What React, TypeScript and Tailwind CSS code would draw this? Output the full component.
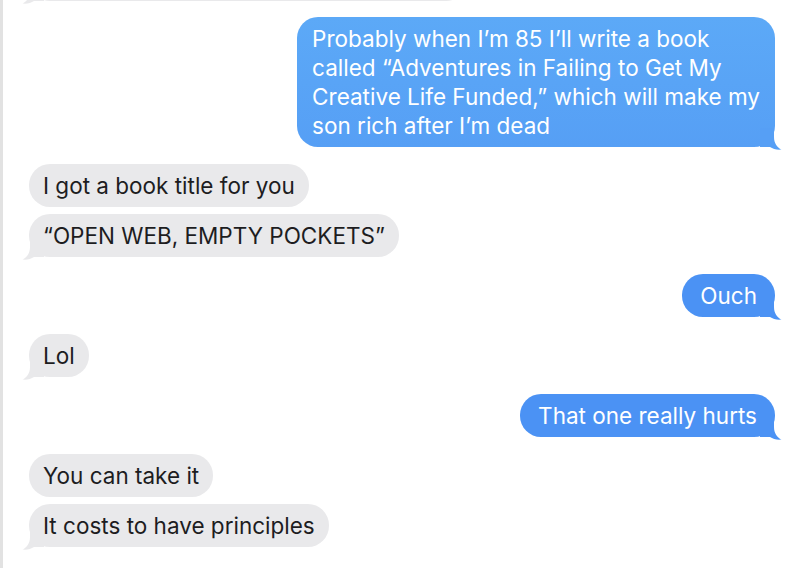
import React from 'react';

type Msg = {
  from: 'me' | 'them';
  lines: string[];
  tail?: boolean;
};

const messages: Msg[] = [
  {
    from: 'me',
    lines: [
      'Probably when I’m 85 I’ll write a book',
      'called “Adventures in Failing to Get My',
      'Creative Life Funded,” which will make my',
      'son rich after I’m dead',
    ],
    tail: true,
  },
  { from: 'them', lines: ['I got a book title for you'] },
  { from: 'them', lines: ['“OPEN WEB, EMPTY POCKETS”'], tail: true },
  { from: 'me', lines: ['Ouch'], tail: true },
  { from: 'them', lines: ['Lol'], tail: true },
  { from: 'me', lines: ['That one really hurts'], tail: true },
  { from: 'them', lines: ['You can take it'] },
  { from: 'them', lines: ['It costs to have principles'], tail: true },
];

// iMessage style tail, drawn for the right side and mirrored for the left
function Tail({ side, fill }: { side: 'left' | 'right'; fill: string }) {
  return (
    <svg
      viewBox="0 0 22 22"
      className={
        side === 'right'
          ? `absolute -right-[7px] -bottom-[3px] h-[22px] w-[22px] ${fill}`
          : `absolute -left-[7px] -bottom-[3px] h-[22px] w-[22px] -scale-x-100 ${fill}`
      }
    >
      <path d="M0 0 H14 V9 C14 15 17 19.5 21.5 21.5 C17 22 13 21 10 19 H0 Z" />
    </svg>
  );
}

function Bubble({ msg }: { msg: Msg }) {
  const mine = msg.from === 'me';
  const multi = msg.lines.length > 1;
  const blue = multi
    ? 'bg-gradient-to-b from-[#5ca9f7] to-[#569ff5]'
    : 'bg-[#4b92f4]';
  return (
    <div className={mine ? 'flex justify-end' : 'flex justify-start'}>
      <div
        className={
          mine
            ? `relative rounded-[21px] py-[7px] text-white ${multi ? 'px-[15px]' : 'px-[18px]'} ${blue}`
            : 'relative rounded-[21px] bg-[#e9e9eb] px-[14px] py-[7px] text-[#1d1d1f]'
        }
      >
        {msg.lines.map((l, i) => (
          <div key={i} className="whitespace-nowrap">
            {l}
          </div>
        ))}
        {msg.tail && (
          <Tail
            side={mine ? 'right' : 'left'}
            fill={mine ? (multi ? 'fill-[#569ff5]' : 'fill-[#4b92f4]') : 'fill-[#e9e9eb]'}
          />
        )}
      </div>
    </div>
  );
}

export default function App() {
  return (
    <div
      className="h-[568px] w-[799px] overflow-hidden border-l-[3px] border-[#e2e2e2] bg-white text-[22.5px] leading-[29px]"
      style={{ fontFamily: 'Inter, "Liberation Sans", sans-serif' }}
    >
      <div className="flex flex-col pl-[26px] pr-[24px]">
        {/* bottom edge of the previous message, scrolled off */}
        <div className="-mt-[42px] flex justify-start">
          <div className="relative h-[43px] w-[438px] rounded-[21px] bg-[#e9e9eb]">
            <Tail side="left" fill="fill-[#e9e9eb]" />
          </div>
        </div>
        {messages.map((m, i) => {
          const prev = i === 0 ? 'them' : messages[i - 1].from;
          const gap = prev === m.from ? 'mt-[7px]' : 'mt-[17px]';
          return (
            <div key={i} className={i === 0 ? 'mt-[16px]' : gap}>
              <Bubble msg={m} />
            </div>
          );
        })}
      </div>
    </div>
  );
}
